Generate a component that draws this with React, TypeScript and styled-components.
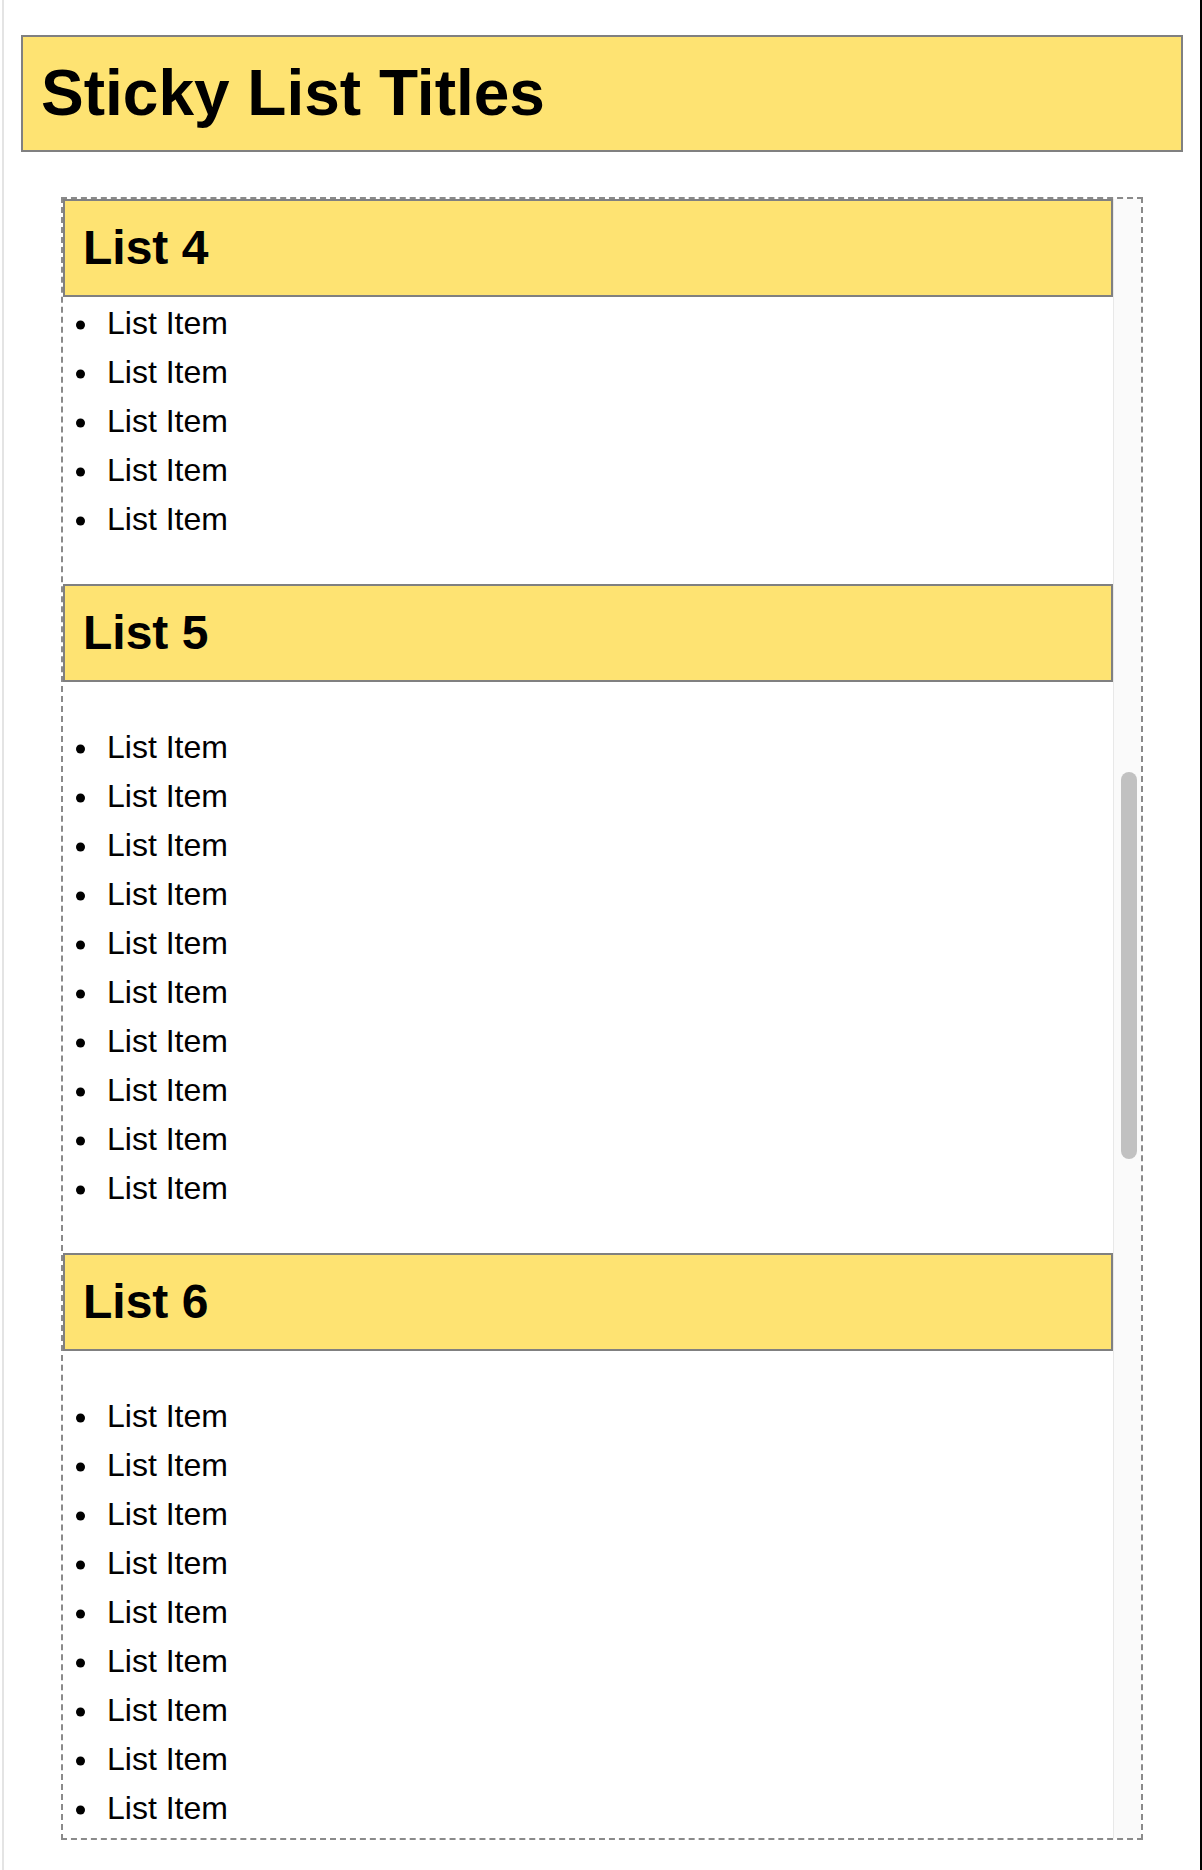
import React from "react";
import styled, { createGlobalStyle } from "styled-components";

const GlobalStyle = createGlobalStyle`
  html, body {
    margin: 0;
    padding: 0;
    background: #ffffff;
  }
  body {
    font-family: "Liberation Sans", Arial, Helvetica, sans-serif;
    color: #000;
  }
  * { box-sizing: border-box; }
`;

const Page = styled.div`
  margin-left: 2px;
  width: 1200px;
  min-height: 1870px;
  border-left: 2px solid #e4e4e4;
  border-right: 2px solid #000;
  padding: 35px 17px 0 17px;
  display: flex;
  flex-direction: column;
`;

const Title = styled.h1`
  margin: 0;
  background: #fee372;
  border: 2px solid #808080;
  padding: 20px 18px;
  font-size: 64px;
  font-weight: 700;
  line-height: 73px;
`;

const Frame = styled.div`
  margin: 45px 40px 0 40px;
  height: 1643px;
  border: 2px dashed #8a8a8a;
  display: flex;
  overflow: hidden;
`;

const Viewport = styled.div`
  flex: 1;
  min-width: 0;
  overflow: hidden;
  display: flex;
  flex-direction: column;
`;

const Track = styled.div`
  position: relative;
  flex: 0 0 28px;
  background: #fafafa;
  border-left: 1px solid #e8e8e8;
`;

const Thumb = styled.div`
  position: absolute;
  left: 7px;
  width: 16px;
  background: #c1c1c1;
  border-radius: 8px;
`;

const Section = styled.section``;

const ListTitle = styled.h2`
  position: sticky;
  top: 0;
  z-index: 1;
  margin: 0;
  background: #fee372;
  border: 2px solid #808080;
  padding: 20px 18px;
  font-size: 48px;
  font-weight: 700;
  line-height: 54px;
`;

const Items = styled.ul<{ $continued?: boolean }>`
  margin: ${(p) => (p.$continued ? "1.5px" : "40.5px")} 0 40.5px;
  padding-left: 44px;
  list-style: none;
`;

const Item = styled.li`
  position: relative;
  font-size: 32px;
  line-height: 49px;

  &::before {
    content: "";
    position: absolute;
    left: -31px;
    top: calc(50% + 2px);
    width: 9px;
    height: 9px;
    border-radius: 50%;
    background: #000;
    transform: translateY(-50%);
  }
`;

const lists = [
  { n: 4, count: 5, continued: true },
  { n: 5, count: 10, continued: false },
  { n: 6, count: 9, continued: false },
];

const trackHeight = 1639;
const scrollTop = 2427;
const scrollHeight = 6942;

export default function App() {
  const thumbTop = (scrollTop / scrollHeight) * trackHeight;
  const thumbHeight = (trackHeight / scrollHeight) * trackHeight;

  return (
    <>
      <GlobalStyle />
      <Page>
        <Title>Sticky List Titles</Title>
        <Frame>
          <Viewport>
            {lists.map((l) => (
              <Section key={l.n}>
                <ListTitle>List {l.n}</ListTitle>
                <Items $continued={l.continued}>
                  {Array.from({ length: l.count }).map((_, i) => (
                    <Item key={i}>List Item</Item>
                  ))}
                </Items>
              </Section>
            ))}
          </Viewport>
          <Track>
            <Thumb style={{ top: thumbTop, height: thumbHeight }} />
          </Track>
        </Frame>
      </Page>
    </>
  );
}
